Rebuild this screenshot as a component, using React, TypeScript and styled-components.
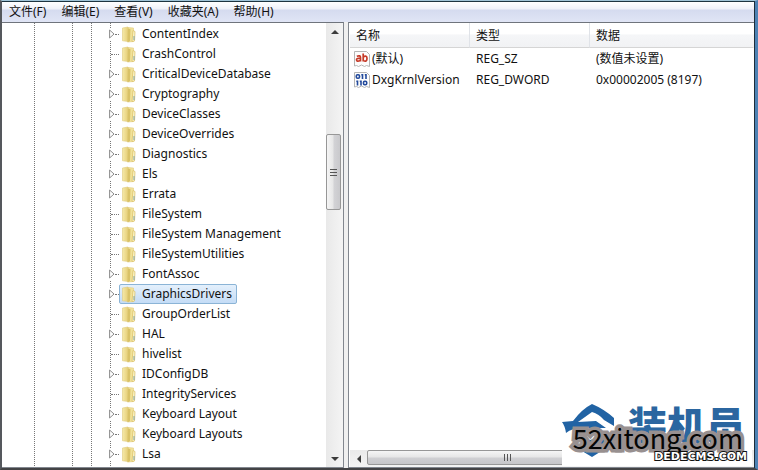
import React from "react";
import styled, { createGlobalStyle, css } from "styled-components";

const GlobalStyle = createGlobalStyle`
  * { box-sizing: border-box; }
  body {
    margin: 0;
    background: #4a4b4e;
    color: #111;
    font: 12px/20px "Noto Sans", "Noto Sans CJK SC", sans-serif;
  }
  button { font: inherit; color: inherit; background: none; border: 0; padding: 0; margin: 0; }
`;

const Desktop = styled.div`
  display: flex;
  flex-direction: column;
  height: 100vh;
  border-top: 1px solid #9fc3d6;
  border-right: 3px solid #4d82b4;
  border-bottom: 2px solid #434345;
  border-left: 2px solid #55585d;
  position: relative;
`;

const Frame = styled.div`
  flex: 1;
  min-height: 0;
  display: flex;
  flex-direction: column;
  border-top: 1px solid #1d3440;
  border-right: 1px solid #1c2c3a;
  background: #fff;
`;

const MenuBar = styled.nav`
  display: flex;
  align-items: center;
  gap: 15px;
  height: 20px;
  flex: none;
  padding-left: 7px;
  background: linear-gradient(#ffffff, #eef1f9 35%, #d5dbef 40%, #e0e5f5);
`;

const MenuItem = styled.button`
  white-space: nowrap;
`;

const Panes = styled.div`
  flex: 1;
  min-height: 0;
  display: grid;
  grid-template-columns: 342px minmax(0, 1fr);
  gap: 4px;
  background: #f0f0f0;
`;

const Pane = styled.section`
  display: flex;
  min-height: 0;
  min-width: 0;
  background: #fff;
  border: 1px solid #82878f;
  border-top-color: #6f747c;
`;

const TreePane = styled(Pane)`
  border-left: 0;
`;

const guide = "linear-gradient(#777 50%, transparent 50%)";

const Tree = styled.ul`
  flex: 1;
  min-width: 0;
  margin: 0;
  padding: 1px 0 0 104px;
  list-style: none;
  overflow: hidden;
  background-image: ${guide}, ${guide}, ${guide}, ${guide};
  background-repeat: repeat-y;
  background-size: 1px 2px;
  background-position: 32px 0, 70px 0, 89px 0, 108px 0;
`;

const TreeRow = styled.li`
  display: flex;
  align-items: center;
  height: 20px;
`;

const Expander = styled.button`
  display: flex;
  align-items: center;
  justify-content: flex-end;
  width: 9px;
  height: 12px;
  background: #fff;
`;

const Spacer = styled.span`
  width: 5px;
`;

const Branch = styled.span`
  flex: 1;
  border-top: 1px dotted #777;
`;

const Stem = styled.span`
  display: flex;
  align-items: center;
  width: 13px;
  flex: none;
`;

const Key = styled.button<{ $selected?: boolean }>`
  display: flex;
  align-items: center;
  gap: 6px;
  height: 20px;
  padding: 0 4px 0 2px;
  border: 1px solid transparent;
  border-radius: 2px;
  white-space: nowrap;
  line-height: 18px;
  ${(p) =>
    p.$selected &&
    css`
      border-color: #8bb4d6;
      background: linear-gradient(#e4f0fc, #c4dcf6);
    `}
`;

const VScroll = styled.div`
  display: flex;
  flex-direction: column;
  width: 17px;
  flex: none;
  background: linear-gradient(90deg, #e9e9e9, #f4f4f4);
`;

const HScroll = styled.div`
  display: flex;
  height: 17px;
  flex: none;
  background: linear-gradient(#e9e9e9, #f4f4f4);
`;

const ScrollArrow = styled.button`
  display: flex;
  align-items: center;
  justify-content: center;
  width: 17px;
  height: 17px;
  flex: none;
`;

const Track = styled.div<{ $before: number; $after: number; $vertical?: boolean }>`
  flex: 1;
  display: grid;
  ${(p) =>
    p.$vertical
      ? css`grid-template-rows: ${p.$before}fr 76px ${p.$after}fr;`
      : css`grid-template-columns: ${p.$before}fr 280px ${p.$after}fr;`}
`;

const Thumb = styled.div<{ $vertical?: boolean }>`
  display: flex;
  align-items: center;
  justify-content: center;
  border: 1px solid #979797;
  border-radius: 2px;
  ${(p) =>
    p.$vertical
      ? css`
          grid-row: 2;
          margin-right: 2px;
          background: linear-gradient(90deg, #f5f5f5, #e6e6e6 48%, #d3d3d6 52%, #c9c9cc);
        `
      : css`
          grid-column: 2;
          margin-bottom: 2px;
          background: linear-gradient(#f5f5f5, #e6e6e6 48%, #d0d0d3 52%, #c6c6c9);
        `}
`;

const ListPane = styled(Pane)`
  flex-direction: column;
  border-right: 0;
  padding-left: 1px;
`;

const ListBody = styled.div`
  flex: 1;
  min-height: 0;
`;

const Values = styled.table`
  width: 100%;
  border-collapse: separate;
  border-spacing: 0;
  table-layout: fixed;
  text-align: left;
`;

const HeadCell = styled.th<{ $wide?: boolean }>`
  width: ${(p) => (p.$wide ? "auto" : "120px")};
  height: 25px;
  padding: 2px 6px 0;
  font-weight: 400;
  line-height: 20px;
  border-bottom: 1px solid #d5d5d5;
  border-right: 1px solid ${(p) => (p.$wide ? "transparent" : "#e0e3e8")};
  background: linear-gradient(#fff 45%, #f5f6f8 50%, #f1f2f4);
`;

const Cell = styled.td`
  height: 21px;
  padding: 1px 6px 0;
  line-height: 20px;
  white-space: nowrap;
`;

const NameCell = styled(Cell)`
  padding: 1px 0 0 4px;
`;

const ValueName = styled.span`
  display: flex;
  align-items: center;
  gap: 2px;
`;

const Watermark = styled.div`
  position: absolute;
  right: 3px;
  bottom: 2px;
  width: 190px;
  height: 66px;
  background: #fff;
`;

const Emblem = styled.svg`
  position: absolute;
  left: 0;
  top: 0;
`;

const Brand = styled.span`
  position: absolute;
  right: 7px;
  top: 1px;
  font: 900 39px/44px "Noto Sans CJK SC", sans-serif;
  color: #2b66a0;
  white-space: nowrap;
`;

const PixelText = styled.span`
  position: absolute;
  right: 5px;
  bottom: 3px;
  font: 700 11px/12px "DejaVu Sans", sans-serif;
  color: #fff;
  -webkit-text-stroke: 2px #111;
  paint-order: stroke fill;
  white-space: nowrap;
`;

const SiteName = styled.span`
  position: absolute;
  right: 9px;
  bottom: 11px;
  font: 400 27px/34px "Noto Sans CJK SC", sans-serif;
  color: #050505;
  -webkit-text-stroke: 7px #989090;
  paint-order: stroke fill;
  white-space: nowrap;
`;

const FolderIcon = () => (
  <svg width="14" height="17" viewBox="0 0 14 17" aria-hidden="true">
    <defs>
      <linearGradient id="leaf" x1="0" x2="1">
        <stop offset="0" stopColor="#f5e9aa" />
        <stop offset="1" stopColor="#e6cf78" />
      </linearGradient>
    </defs>
    <path d="M6 1.5 11.5 2v13.500L6 16z" fill="#f1e29a" stroke="#e2cd80" strokeWidth=".6" />
    <path d="M11 4.500 13 5.500 12.500 15 10 15.500z" fill="#fbf4c8" stroke="#d8bd62" strokeWidth=".7" />
    <path d="M.5 2 6 1v14.500L.5 14.800z" fill="url(#leaf)" stroke="#dfc97a" strokeWidth=".6" />
    <path d="M6 2.500 8.500 3.300 8 15 5.500 16.500z" fill="#d9c268" />
    <path d="M12 10v4" stroke="#82a5a2" strokeWidth="1" />
  </svg>
);

const ExpandIcon = () => (
  <svg width="6" height="10" viewBox="0 0 6 10" aria-hidden="true">
    <path d="M.6 1v8L5 5z" fill="#fff" stroke="#8c8c8c" />
  </svg>
);

const Arrow = ({ d }: { d: string }) => (
  <svg width="8" height="8" viewBox="0 0 8 8" aria-hidden="true">
    <path d={d} fill="#3c3c3c" />
  </svg>
);

const Grip = ({ vertical }: { vertical?: boolean }) => (
  <svg width="9" height="9" viewBox="0 0 9 9" aria-hidden="true">
    <path
      d={vertical ? "M1 1.500h7M1 4.500h7M1 7.500h7" : "M1.500 1v7M4.500 1v7M7.500 1v7"}
      stroke="#555"
    />
  </svg>
);

const Sheet = () => (
  <path
    d="M.5.5h12l3 3v12l-3-1-2 1-3-1.500-3 1.500-2-1-2 .5z"
    fill="#fdfdfd"
    stroke="#b5b5b5"
  />
);

const StringIcon = () => (
  <svg width="16" height="16" viewBox="0 0 16 16" aria-hidden="true">
    <Sheet />
    <g fill="none" stroke="#c63a28" strokeWidth="1.700">
      <path d="M2.800 5.200q3.700-1.200 3.700 1.200v4M6.500 7.200q-4-.2-4 1.500 0 2.500 4 .8" />
      <path d="M9.200 2.500v8M9.200 6q3.800-2.200 3.800 1.500 0 3.800-3.800 2" />
    </g>
  </svg>
);

const BinaryIcon = () => (
  <svg width="16" height="16" viewBox="0 0 16 16" aria-hidden="true">
    <Sheet />
    <g fill="none" stroke="#234a9c" strokeWidth="1.600">
      <rect x="2.300" y="2.700" width="3.200" height="3.600" rx="1.200" />
      <path d="M8.500 2v5M12 2v5M3.500 8.500v5M7 8.500v5M7.300 2.700h1M10.800 2.700h1M2.300 9.200h1M5.800 9.200h1" />
      <rect x="9.500" y="9.200" width="3.200" height="3.600" rx="1.200" />
    </g>
  </svg>
);

const menus = ["文件(F)", "编辑(E)", "查看(V)", "收藏夹(A)", "帮助(H)"];

const keys: { name: string; leaf?: boolean; selected?: boolean }[] = [
  { name: "ContentIndex" },
  { name: "CrashControl", leaf: true },
  { name: "CriticalDeviceDatabase" },
  { name: "Cryptography" },
  { name: "DeviceClasses" },
  { name: "DeviceOverrides" },
  { name: "Diagnostics" },
  { name: "Els" },
  { name: "Errata" },
  { name: "FileSystem", leaf: true },
  { name: "FileSystem Management", leaf: true },
  { name: "FileSystemUtilities", leaf: true },
  { name: "FontAssoc" },
  { name: "GraphicsDrivers", selected: true },
  { name: "GroupOrderList", leaf: true },
  { name: "HAL" },
  { name: "hivelist", leaf: true },
  { name: "IDConfigDB" },
  { name: "IntegrityServices", leaf: true },
  { name: "Keyboard Layout" },
  { name: "Keyboard Layouts" },
  { name: "Lsa" },
];

const values = [
  { name: "(默认)", type: "REG_SZ", data: "(数值未设置)", icon: <StringIcon /> },
  { name: "DxgKrnlVersion", type: "REG_DWORD", data: "0x00002005 (8197)", icon: <BinaryIcon /> },
];

export default function App() {
  return (
    <Desktop>
      <GlobalStyle />
      <Frame>
        <MenuBar>
          {menus.map((m) => (
            <MenuItem key={m}>{m}</MenuItem>
          ))}
        </MenuBar>
        <Panes>
          <TreePane>
            <Tree>
              {keys.map((k) => (
                <TreeRow key={k.name}>
                  <Stem>
                    {k.leaf ? (
                      <Spacer />
                    ) : (
                      <Expander aria-label={`Expand ${k.name}`}>
                        <ExpandIcon />
                      </Expander>
                    )}
                    <Branch />
                  </Stem>
                  <Key $selected={k.selected}>
                    <FolderIcon />
                    {k.name}
                  </Key>
                </TreeRow>
              ))}
            </Tree>
            <VScroll>
              <ScrollArrow aria-label="Scroll up">
                <Arrow d="M0 6 4 2l4 4z" />
              </ScrollArrow>
              <Track $vertical $before={94} $after={240}>
                <Thumb $vertical>
                  <Grip vertical />
                </Thumb>
              </Track>
              <ScrollArrow aria-label="Scroll down">
                <Arrow d="M0 2h8L4 6z" />
              </ScrollArrow>
            </VScroll>
          </TreePane>
          <ListPane>
            <ListBody>
              <Values>
                <thead>
                  <tr>
                    <HeadCell>名称</HeadCell>
                    <HeadCell>类型</HeadCell>
                    <HeadCell $wide>数据</HeadCell>
                  </tr>
                </thead>
                <tbody>
                  {values.map((v) => (
                    <tr key={v.name}>
                      <NameCell>
                        <ValueName>
                          {v.icon}
                          {v.name}
                        </ValueName>
                      </NameCell>
                      <Cell>{v.type}</Cell>
                      <Cell>{v.data}</Cell>
                    </tr>
                  ))}
                </tbody>
              </Values>
            </ListBody>
            <HScroll>
              <ScrollArrow aria-label="Scroll left">
                <Arrow d="M6 0v8L2 4z" />
              </ScrollArrow>
              <Track $before={0} $after={1}>
                <Thumb>
                  <Grip />
                </Thumb>
              </Track>
              <ScrollArrow aria-label="Scroll right">
                <Arrow d="M2 0v8l4-4z" />
              </ScrollArrow>
            </HScroll>
          </ListPane>
        </Panes>
      </Frame>
      <Watermark>
        <Emblem width="62" height="62" viewBox="0 0 62 62" aria-hidden="true">
          <g fill="#2163a4">
            <path d="M0 22 11 21Q20 9 30 4 42 9 52 18V26L42 20Q37 14 30 12L16 22 34 21 44 28H20Q10 28 4 33Q3 26 0 22z" />
            <path d="M14 32 28 40 44 36 48 42 38 52 30 57 20 51 30 52 38 45 26 47 12 38z" />
          </g>
        </Emblem>
        <Brand>装机员</Brand>
        <SiteName>52xitong.com</SiteName>
        <PixelText>DEDECMS.COM</PixelText>
      </Watermark>
    </Desktop>
  );
}
